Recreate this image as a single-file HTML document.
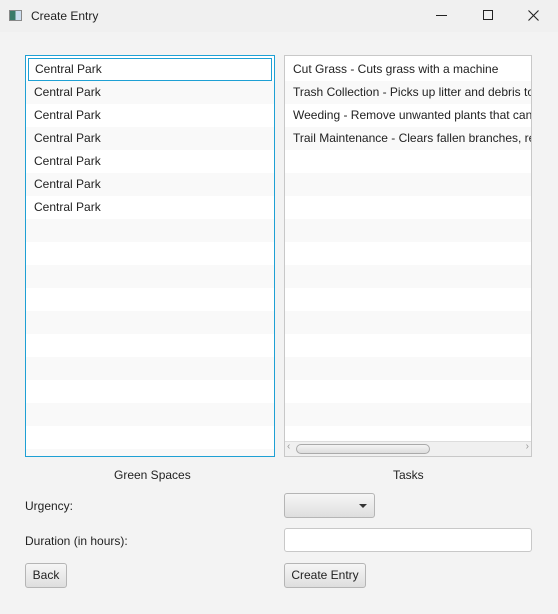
<html><head><style>
body{margin:0;width:558px;height:614px;background:#f3f3f3;font-family:"Liberation Sans",sans-serif;font-size:12px;color:#222;position:relative;overflow:hidden}
.a{position:absolute}
.list{position:absolute;background:#fff;overflow:hidden}
.row{height:23px;line-height:23px;padding-left:8px;white-space:nowrap;box-sizing:border-box}
.row:nth-child(even){background:#f9f9f9}
.btn{position:absolute;border:1px solid #b5b5b5;border-radius:3px;background:linear-gradient(#f6f6f6,#dedede);box-sizing:border-box;text-align:center;line-height:22px}
</style></head><body>
<div class="a" style="left:0;top:0;width:558px;height:32px;background:#f0f0f0"></div>
<div class="a" style="left:9px;top:10px;width:13px;height:11px;border:1px solid #888;background:linear-gradient(90deg,#3a7a6a 50%,#cde 50%);box-sizing:border-box"></div>
<div class="a" style="left:31px;top:9px">Create Entry</div>
<div class="a" style="left:436px;top:15px;width:11px;height:1px;background:#222"></div>
<div class="a" style="left:483px;top:10px;width:10px;height:10px;border:1px solid #222;box-sizing:border-box"></div>
<svg class="a" style="left:528px;top:10px" width="11" height="11"><path d="M0.5 0.5L10.5 10.5M10.5 0.5L0.5 10.5" stroke="#222" stroke-width="1.1"/></svg>

<div class="list" style="left:25px;top:55px;width:250px;height:402px;border:1px solid #1ea0d4;box-sizing:border-box;padding-top:2px">
<div class="row" style="border:1px solid #1ea0d4;margin:0 2px;padding-left:6px;line-height:21px">Central Park</div>
<div class="row">Central Park</div><div class="row" style="background:#fff">Central Park</div><div class="row">Central Park</div><div class="row" style="background:#fff">Central Park</div><div class="row">Central Park</div><div class="row" style="background:#fff">Central Park</div>
<div class="row"></div><div class="row" style="background:#fff"></div><div class="row"></div><div class="row" style="background:#fff"></div><div class="row"></div><div class="row" style="background:#fff"></div><div class="row"></div><div class="row" style="background:#fff"></div><div class="row"></div><div class="row" style="background:#fff"></div><div class="row"></div>
</div>

<div class="list" style="left:284px;top:55px;width:248px;height:402px;border:1px solid #c8c8c8;box-sizing:border-box;padding-top:2px">
<div class="row" style="background:#fff">Cut Grass - Cuts grass with a machine</div>
<div class="row" style="background:#f9f9f9">Trash Collection - Picks up litter and debris to keep</div>
<div class="row" style="background:#fff">Weeding - Remove unwanted plants that can</div>
<div class="row" style="background:#f9f9f9">Trail Maintenance - Clears fallen branches, repairs</div>
<div class="row" style="background:#fff"></div><div class="row" style="background:#f9f9f9"></div><div class="row" style="background:#fff"></div><div class="row" style="background:#f9f9f9"></div><div class="row" style="background:#fff"></div><div class="row" style="background:#f9f9f9"></div><div class="row" style="background:#fff"></div><div class="row" style="background:#f9f9f9"></div><div class="row" style="background:#fff"></div><div class="row" style="background:#f9f9f9"></div><div class="row" style="background:#fff"></div><div class="row" style="background:#f9f9f9"></div><div class="row" style="background:#fff"></div>
<div class="a" style="left:0;bottom:0;width:246px;height:14px;background:#f0f0f0;border-top:1px solid #ddd">
<div class="a" style="left:11px;top:2px;width:132px;height:8px;border:1px solid #aaa;border-radius:5px;background:linear-gradient(#f4f4f4,#ddd)"></div>
<div class="a" style="left:2px;top:-1px;font-size:10px;color:#999">‹</div>
<div class="a" style="right:2px;top:-1px;font-size:10px;color:#999">›</div>
</div>
</div>

<div class="a" style="left:114px;top:468px">Green Spaces</div>
<div class="a" style="left:393px;top:468px">Tasks</div>
<div class="a" style="left:25px;top:499px">Urgency:</div>
<div class="btn" style="left:284px;top:493px;width:91px;height:25px"><div class="a" style="left:74px;top:10px;border:4px solid transparent;border-top:4px solid #333;border-bottom:0"></div></div>
<div class="a" style="left:25px;top:534px">Duration (in hours):</div>
<div class="a" style="left:284px;top:528px;width:248px;height:24px;background:#fff;border:1px solid #c8c8c8;border-radius:3px;box-sizing:border-box"></div>
<div class="btn" style="left:25px;top:563px;width:42px;height:25px">Back</div>
<div class="btn" style="left:284px;top:563px;width:82px;height:25px">Create Entry</div>
</body></html>
